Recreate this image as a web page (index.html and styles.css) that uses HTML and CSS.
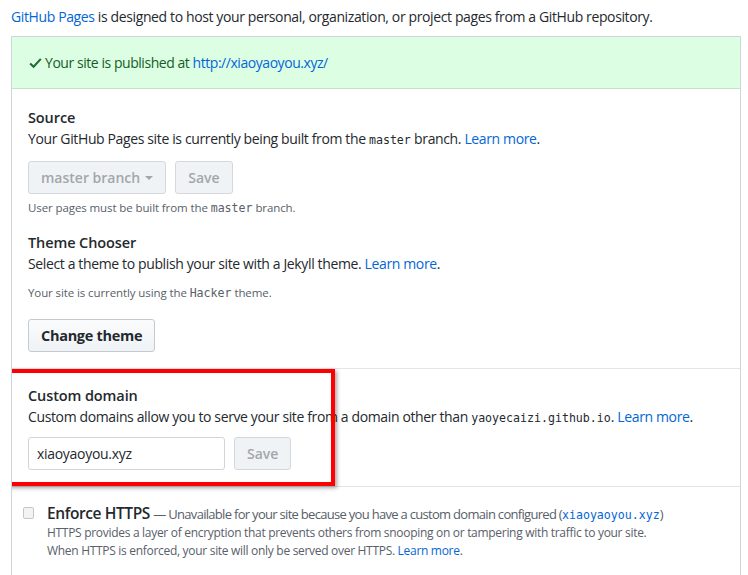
FILE: index.html
```html
<!DOCTYPE html>
<html>
<head>
<meta charset="utf-8">
<link rel="stylesheet" href="styles.css">
</head>
<body>
<p class="intro"><a class="link">GitHub Pages</a> is designed to host your personal, organization, or project pages from a GitHub repository.</p>
<div class="box">
  <div class="flash">
    <svg class="check" width="13" height="13" viewBox="0 0 12 12"><path fill="#1e6b30" d="M11.6 2.4L4.3 10.3 0.4 6.6 1.7 5.2 4.2 7.6 10.2 1.1z"/></svg>
    <span>Your site is published at <a class="link">http://xiaoyaoyou.xyz/</a></span>
  </div>
  <div class="section">
    <h3 class="heading">Source</h3>
    <p class="desc">Your GitHub Pages site is currently being built from the <code class="mono">master</code> branch. <a class="link">Learn more</a>.</p>
    <div class="row">
      <span class="btn disabled">master branch <span class="caret"></span></span>
      <span class="btn disabled">Save</span>
    </div>
    <p class="note">User pages must be built from the <code class="mono">master</code> branch.</p>
    <h3 class="heading theme-h">Theme Chooser</h3>
    <p class="desc">Select a theme to publish your site with a Jekyll theme. <a class="link">Learn more</a>.</p>
    <p class="note note2">Your site is currently using the <code class="mono">Hacker</code> theme.</p>
    <span class="btn primary">Change theme</span>
  </div>
  <div class="section custom">
    <h3 class="heading">Custom domain</h3>
    <p class="desc">Custom domains allow you to serve your site from a domain other than <code class="mono">yaoyecaizi.github.io</code>. <a class="link">Learn more</a>.</p>
    <div class="row custom-row">
      <span class="input">xiaoyaoyou.xyz</span>
      <span class="btn disabled">Save</span>
    </div>
    <div class="highlight"></div>
  </div>
  <div class="section https">
    <div class="https-row">
      <span class="checkbox"></span>
      <div class="https-text">
        <p class="https-title"><strong>Enforce HTTPS</strong> <span class="muted">— Unavailable for your site because you have a custom domain configured (<code class="mono link">xiaoyaoyou.xyz</code>)</span></p>
        <p class="https-desc">HTTPS provides a layer of encryption that prevents others from snooping on or tampering with traffic to your site.<br>When HTTPS is enforced, your site will only be served over HTTPS. <a class="link">Learn more</a>.</p>
      </div>
    </div>
  </div>
</div>
</body>
</html>
```
FILE: styles.css
```css
* { box-sizing: border-box; }
html, body { margin: 0; padding: 0; background: #fff; }
body {
  font-family: "Open Sans", "Noto Sans", sans-serif;
  font-size: 14px;
  color: #24292e;
  width: 748px;
  height: 575px;
  overflow: hidden;
}
p { margin: 0; }
h3 { margin: 0; }
.link { color: #0366d6; text-decoration: none; }
.mono { font-family: "DejaVu Sans Mono", monospace; font-size: 11.6px; letter-spacing: 0; }
.intro {
  margin: 7px 0 0 11px;
  height: 20px;
  line-height: 20px;
  font-size: 14px;
  letter-spacing: -0.38px;
}
.box {
  margin: 9px 0 0 11px;
  width: 730px;
  border: 1px solid #d1d5da;
  border-bottom: none;
  height: 539px;
  overflow: hidden;
}
.flash {
  height: 52px;
  background: #dcffe4;
  border-bottom: 1px solid #bfe5c8;
  display: flex;
  align-items: center;
  padding-left: 17px;
  gap: 3px;
  color: #165c26;
  letter-spacing: -0.45px;
}
.check { margin-top: 1px; }
.section { padding: 19px 16px 16px 16px; border-bottom: 1px solid #e1e4e8; position: relative; }
.heading { font-size: 14.5px; font-weight: 600; line-height: 20px; letter-spacing: -0.1px; }
.desc { line-height: 20px; margin-top: 1px; letter-spacing: -0.37px; }
.row { display: flex; gap: 9px; margin-top: 11px; }
.btn {
  display: inline-flex;
  align-items: center;
  height: 33px;
  padding: 0 12px;
  border: 1px solid #d1d5da;
  border-radius: 3px;
  font-weight: 600;
  font-size: 14px;
}
.disabled { background: #eff3f6; color: #a3a7ab; border-color: #d4d8dc; }
.caret {
  display: inline-block;
  margin-left: 5px;
  border-top: 4px solid #a3a7ab;
  border-left: 4px solid transparent;
  border-right: 4px solid transparent;
}
.note { font-size: 11.5px; color: #586069; margin-top: 6px; line-height: 16px; letter-spacing: -0.1px; }
.theme-h { margin-top: 17px; }
.note2 { margin-top: 11px; }
.primary {
  margin-top: 18px;
  background: linear-gradient(#fafbfc, #eff3f6);
  border-color: #c6cacf;
  color: #24292e;
  padding: 0 12px;
  font-size: 14.5px;
  font-weight: 700;
  letter-spacing: -0.3px;
}
.custom { padding-top: 17px; padding-bottom: 16px; }
.custom-row { margin-top: 9px; }
.input {
  display: inline-flex;
  align-items: center;
  width: 197px;
  height: 33px;
  border: 1px solid #d1d5da;
  border-radius: 3px;
  padding-left: 8px;
  font-size: 14px;
  letter-spacing: -0.3px;
}
.highlight {
  position: absolute;
  left: -4px;
  top: 0;
  width: 327px;
  height: 117px;
  border: 4px solid #ff0000;
  box-shadow: 2px 2px 4px rgba(0,0,0,0.35);
  pointer-events: none;
}
.https { padding-top: 17px; border-bottom: none; }
.https-row { display: flex; gap: 13px; }
.checkbox {
  width: 11px;
  height: 12px;
  margin-top: 3px;
  margin-left: -5px;
  border: 1px solid #c6c6c6;
  border-radius: 2px;
  background: #f3f3f3;
}
.https-title { font-size: 13px; color: #586069; line-height: 18px; }
.https-title strong { font-size: 15.5px; font-weight: 600; color: #24292e; letter-spacing: -0.4px; }
.muted { letter-spacing: -0.7px; }
.https-desc { font-size: 12px; color: #586069; line-height: 18px; letter-spacing: -0.3px; }
```
